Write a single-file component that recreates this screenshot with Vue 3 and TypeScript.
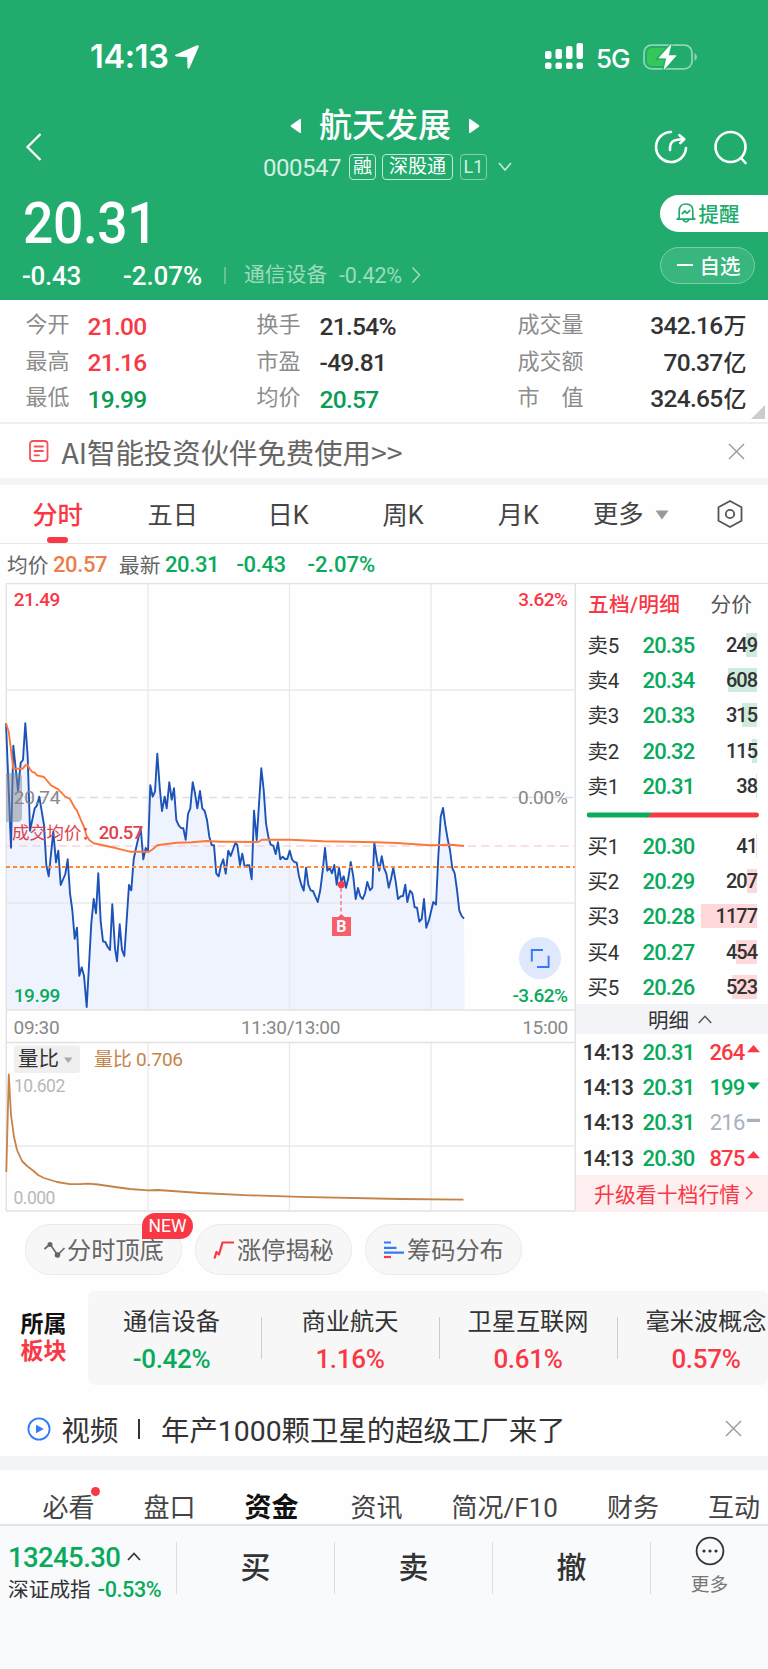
<script setup lang="ts">
interface Level { name: string; price: string; qty: string; bar: number }
interface Trade { price: string; qty: string; dir: 'up' | 'down' | 'flat' }
interface Sector { name: string; change: string; down?: boolean }

const stats = [
  ['今开', '21.00', 'red', '换手', '21.54%', '', '成交量', '342.16', '万'],
  ['最高', '21.16', 'red', '市盈', '-49.81', '', '成交额', '70.37', '亿'],
  ['最低', '19.99', 'dgreen', '均价', '20.57', 'dgreen', '市　值', '324.65', '亿'],
]

const periods = ['分时', '五日', '日K', '周K', '月K']

const sells: Level[] = [
  { name: '卖5', price: '20.35', qty: '249', bar: 11 },
  { name: '卖4', price: '20.34', qty: '608', bar: 29 },
  { name: '卖3', price: '20.33', qty: '315', bar: 15 },
  { name: '卖2', price: '20.32', qty: '115', bar: 5 },
  { name: '卖1', price: '20.31', qty: '38', bar: 1 },
]
const buys: Level[] = [
  { name: '买1', price: '20.30', qty: '41', bar: 1 },
  { name: '买2', price: '20.29', qty: '207', bar: 10 },
  { name: '买3', price: '20.28', qty: '1177', bar: 56 },
  { name: '买4', price: '20.27', qty: '454', bar: 21 },
  { name: '买5', price: '20.26', qty: '523', bar: 25 },
]
const trades: Trade[] = [
  { price: '20.31', qty: '264', dir: 'up' },
  { price: '20.31', qty: '199', dir: 'down' },
  { price: '20.31', qty: '216', dir: 'flat' },
  { price: '20.30', qty: '875', dir: 'up' },
]
const sectors: Sector[] = [
  { name: '通信设备', change: '-0.42%', down: true },
  { name: '商业航天', change: '1.16%' },
  { name: '卫星互联网', change: '0.61%' },
  { name: '毫米波概念', change: '0.57%' },
]
const infoTabs = ['必看', '盘口', '资金', '资讯', '简况/F10', '财务', '互动']

/* Series are stored at a third of a pixel; y counts from 117px below the chart top. */
type Pt = [number, number]
const parse = (s: string, dx = 0, dy = 0): Pt[] =>
  s.trim().split(/\s+/).map((p) => {
    const [x, y] = p.split(',').map(Number)
    return [(x + dx) / 3, (y + dy) / 3 + 117]
  })
const toPath = (pts: Pt[]): string => pts.map(([x, y]) => `${x.toFixed(1)},${y.toFixed(1)}`).join(' ')

const price: Pt[] = [
  ...parse(`18,70 33,443 40,137 54,272 62,188 69,180 76,70 83,170 90,392 104,325 111,316 118,290 132,375 139,495
    146,529 160,395 168,487 175,452 182,555 196,522 203,478 210,580 217,630 224,716 231,683 238,827 245,802 252,827
    260,921 274,670 281,597 288,640 295,520 302,665 309,724 316,726 323,741 330,750 337,613 345,745 351,784 359,673
    366,750 373,768 387,555 394,571 401,478 408,445 422,384 430,478 437,444 444,455 451,256 458,290 465,275 472,161
    479,262 486,333 494,290 500,325 508,247 515,299 522,265 529,360 536,376 543,384 550,385 557,419 564,342 571,325
    578,247 585,280 592,325 600,273 607,325 614,333 621,360 628,410 635,435 642,436 649,521 656,529 663,495 670,478
    677,521 685,452 692,468 706,429 712,435 720,495 727,461 734,501 741,496`),
  ...parse(`58,376 65,418 72,212 80,300 94,85 101,150 108,250 115,290 122,314 130,317 137,342 144,307 151,358 158,350
    165,357 172,357 179,332 186,358 193,366 200,368 207,409 214,434 221,452 228,383 235,434 242,451 249,453 256,469
    263,486 271,450 278,392 285,324 292,392 299,384 306,400 313,375 320,434 327,383 334,425 341,409 348,443 355,415
    362,366 370,410 377,477 384,444 391,469 398,477 405,460 412,426 420,451 427,443 433,308 441,360 448,392 455,349
    462,384 469,400 476,443 483,417 490,383 497,425 504,477 512,469 519,468 526,434 532,486 540,452 547,460 554,502
    561,503 568,545 575,537 582,477 589,563 597,540 610,486 618,494 625,350 632,230 639,204 646,255 653,298 660,330
    667,384 674,400 681,450 688,512 695,528 702,536`, 690, 120),
]
const average: Pt[] = [
  ...parse(`18,70 26,95 33,150 40,206 68,206 76,196 83,195 90,208 97,216 104,218 111,226 132,231 153,256 175,268
    196,290 210,297 224,323 231,332 245,366 252,380 260,408 268,420 281,430 309,436 350,445 390,455 447,455 458,448
    472,436 500,432 530,428 575,427 620,423 660,425`),
  ...parse('0,305 85,306 95,299 180,299 280,304 440,307 500,309 600,316 665,314 702,318', 690, 120),
]
const pricePath = toPath(price)
const areaPath = `6,426.5 ${pricePath} 464.6,426.5`
const averagePath = toPath(average)
</script>

<template>
  <div class="page">
    <header class="head">
      <div class="status">
        <span class="clock">14:13</span>
        <svg class="loc" width="26" height="26" viewBox="0 0 26 26"><path d="M22.5 1.6 Q25.2 .6 24.6 3.2 L15.7 23.6 Q14.3 26 13.5 23.5 L13.2 13.3 L2.5 12.6 Q-.3 11.8 2 10.4 Z" fill="#fff" /></svg>
        <svg class="signal" width="40" height="28" viewBox="0 0 40 28" fill="#fff">
          <rect x="0" y="9" width="6.5" height="8" rx="2" /><rect x="10.5" y="7" width="6.5" height="10" rx="2" />
          <rect x="21" y="4" width="6.5" height="13" rx="2" /><rect x="31.5" y="1" width="6.5" height="16" rx="2" />
          <rect x="0" y="20.5" width="6.5" height="6.5" rx="2" /><rect x="10.5" y="20.5" width="6.5" height="6.5" rx="2" />
          <rect x="21" y="20.5" width="6.5" height="6.5" rx="2" /><rect x="31.5" y="20.5" width="6.5" height="6.5" rx="2" />
        </svg>
        <span class="net">5G</span>
        <svg class="battery" width="56" height="28" viewBox="0 0 56 28">
          <rect x="1" y="2.2" width="48" height="23.6" rx="7.5" fill="none" stroke="#8ed5b3" stroke-width="1.8" />
          <path d="M9 5 H23 V23 H9 Q4 23 4 18 V10 Q4 5 9 5Z" fill="#34c759" />
          <path d="M51.5 10 Q54 11.5 54 14 Q54 16.5 51.5 18Z" fill="#8ed5b3" />
          <path d="M28.6 .5 L14 15.8 H22.6 L20 28 L34.6 12 H26.2Z" fill="#fff" stroke="#21ac6e" stroke-width="2" />
          <path d="M28 1.5 L16 15 H23.7 L21 26.5 L33 12.7 H25.3Z" fill="#fff" stroke="#fff" stroke-width=".8" stroke-linejoin="round" />
        </svg>
      </div>

      <div class="titlebar">
        <svg class="back" width="18" height="30" viewBox="0 0 18 30"><path d="M15.5 2 L2.5 15 L15.5 28" fill="none" stroke="#fff" stroke-width="2.3" /></svg>
        <div class="title">
          <div class="name">
            <svg width="12" height="16" viewBox="0 0 12 16"><path d="M11 1.5 V14.5 Q10.5 15.5 9.5 14.7 L1 8.7 Q.3 8 1 7.3 L9.5 1.3 Q10.5 .6 11 1.5Z" fill="#fff" /></svg>
            <h1>航天发展</h1>
            <svg width="12" height="16" viewBox="0 0 12 16"><path d="M1 1.5 V14.5 Q1.5 15.5 2.5 14.7 L11 8.7 Q11.7 8 11 7.3 L2.5 1.3 Q1.5 .6 1 1.5Z" fill="#fff" /></svg>
          </div>
          <div class="code">
            <span class="num">000547</span>
            <span class="tag t1">融</span><span class="tag t3">深股通</span><span class="tag dim">L1</span>
            <svg width="14" height="10" viewBox="0 0 14 10"><path d="M1 1 L7 8 L13 1" fill="none" stroke="#c8ead9" stroke-width="1.6" /></svg>
          </div>
        </div>
        <svg class="share" width="36" height="36" viewBox="0 0 36 36" fill="none" stroke="#fff" stroke-width="2.6" stroke-linecap="round" stroke-linejoin="round">
          <path d="M18 3 A15 15 0 1 0 33 19" /><path d="M17 21 C16.5 13 20 10 30.5 10.2" /><path d="M26.5 6.2 L31.3 10.2 L27.3 14.2" />
        </svg>
        <svg class="search" width="36" height="36" viewBox="0 0 36 36" fill="none" stroke="#fff" stroke-width="2.6" stroke-linecap="round">
          <circle cx="17.5" cy="18" r="15" /><path d="M28 29 L32.5 34" />
        </svg>
      </div>

      <div class="quote">
        <div class="qleft">
          <div class="big">20.31</div>
          <div class="sub">
            <span class="c1">-0.43</span><span class="c2">-2.07%</span><i></i>
            <span class="ind">通信设备</span><span class="indv">-0.42%</span>
            <svg width="10" height="18" viewBox="0 0 10 18"><path d="M1.5 1.5 L8.5 9 L1.5 16.5" fill="none" stroke="#a0d9bf" stroke-width="1.6" /></svg>
          </div>
        </div>
        <div class="actions">
          <div class="pill solid">
            <svg width="20" height="22" viewBox="0 0 20 22" fill="none" stroke="#21ac6e" stroke-width="1.7" stroke-linejoin="round" stroke-linecap="round">
              <path d="M3.2 15.5 V9 Q3.2 2 10 2 Q16.8 2 16.8 9 V15.5 L18.8 17.2 H1.2Z" /><path d="M7 17.5 Q10 22.5 13 17.5" /><path d="M6.2 11.5 L9 9 L10.8 11.3 L13.8 8.6" />
            </svg>提醒
          </div>
          <div class="pill ghost"><i></i>自选</div>
        </div>
      </div>
    </header>

    <section class="stats">
      <div v-for="r in stats" :key="r[0]" class="srow">
        <span class="lab">{{ r[0] }}</span><span class="val" :class="r[2]">{{ r[1] }}</span>
        <span class="lab">{{ r[3] }}</span><span class="val" :class="r[5]">{{ r[4] }}</span>
        <span class="lab">{{ r[6] }}</span><span class="val right">{{ r[7] }}<small>{{ r[8] }}</small></span>
      </div>
      <svg class="corner" width="14" height="14" viewBox="0 0 14 14"><path d="M14 0 V14 H0Z" fill="#ccc" /></svg>
    </section>

    <section class="notice">
      <svg class="ic" width="20" height="22" viewBox="0 0 20 22" fill="none" stroke="#f5505c" stroke-width="1.8" stroke-linecap="round"><rect x="1" y="1" width="17.5" height="20" rx="3" /><path d="M5.5 6.5 H14 M5.5 11 H14 M5.5 15.3 H10" /></svg>
      <span>AI智能投资伙伴免费使用&gt;&gt;</span>
      <svg class="x" width="17" height="17" viewBox="0 0 17 17"><path d="M1 1 L16 16 M16 1 L1 16" stroke="#999" stroke-width="1.4" /></svg>
    </section>
    <div class="band b1"></div>

    <nav class="periods">
      <div v-for="(p, i) in periods" :key="p" class="ptab" :class="{ on: i === 0 }">{{ p }}</div>
      <div class="ptab more">更多<svg width="14" height="10" viewBox="0 0 14 10"><path d="M.5 .5 H13.5 L7 9.5Z" fill="#999" /></svg></div>
      <svg class="hex" width="28" height="30" viewBox="0 0 28 30" fill="none" stroke="#555" stroke-width="1.8" stroke-linejoin="round"><path d="M14 2 L25.5 8.3 V21.7 L14 28 L2.5 21.7 V8.3Z" /><circle cx="14" cy="15" r="4.2" /></svg>
    </nav>

    <div class="legend">
      <span>均价</span><b class="orange v1">20.57</b><span>最新</span><b class="v2">20.31</b><b class="v3">-0.43</b><b class="v4">-2.07%</b>
    </div>

    <main class="market">
      <div class="charts">
        <svg class="chart" width="576" height="629" viewBox="0 0 576 629">
          <polygon :points="areaPath" fill="#eff3fe" />
          <g stroke="#e9e9ea" stroke-width="1.3" fill="none">
            <path d="M148 0 V426 M289.5 0 V426 M431 0 V426 M6 107 H575 M6 320 H575" />
            <path d="M148 459 V628 M289.5 459 V628 M431 459 V628 M6 563 H575" />
          </g>
          <path d="M6.3 0 V628 M6 .6 H576 M575.3 0 V628 M6 427 H575 M6 459.5 H575 M6 628 H575" stroke="#e2e2e4" stroke-width="1.4" fill="none" />
          <path d="M24 214.5 H575" stroke="#d5dfe9" stroke-width="1.4" stroke-dasharray="8 5.2" />
          <path d="M6 263 H575" stroke="#f8d5d9" stroke-width="1.4" stroke-dasharray="8 5.2" />
          <polyline :points="pricePath" fill="none" stroke="#1b53b8" stroke-width="1.9" stroke-linejoin="round" />
          <polyline :points="averagePath" fill="none" stroke="#fc783a" stroke-width="1.9" stroke-linejoin="round" />
          <path d="M6 284 H575" stroke="#fc8a38" stroke-width="2" stroke-dasharray="4 3" />
          <path d="M6 190 H17 Q22 190 22 195 V234 Q22 239 17 239 H6Z" fill="#7d8694" fill-opacity=".5" />
          <path d="M341 305 V330" stroke="#f0606c" stroke-width="1.2" stroke-dasharray="4 2.5" />
          <circle cx="341.3" cy="301.6" r="3.6" fill="#f93a48" />
          <path d="M332 334 H338 L341.3 331 L344.5 334 H351 V353 H332Z" fill="#f85d6c" />
          <text x="341.4" y="349.3" class="bm" text-anchor="middle">B</text>
          <circle cx="540" cy="375" r="21" fill="#dfe8fd" />
          <path d="M531.8 378.5 V367 H543 M537 384 H548.6 V372.8" fill="none" stroke="#2f7bf8" stroke-width="1.9" />
          <g class="ax">
            <text x="13.8" y="22.8" fill="#f93845">21.49</text>
            <text x="567.5" y="22.8" fill="#f93845" text-anchor="end">3.62%</text>
            <text x="13.8" y="220.8" class="mid">20.74</text>
            <text x="567.5" y="220.8" class="mid" text-anchor="end">0.00%</text>
            <text x="13.8" y="419" fill="#08aa5b">19.99</text>
            <text x="567.5" y="419" fill="#08aa5b" text-anchor="end">-3.62%</text>
            <text x="12" y="256" fill="#df424d" class="avg">成交均价：</text>
            <text x="98.8" y="255.8" fill="#df424d" class="avgv">20.57</text>
          </g>
          <g class="ax mid">
            <text x="13.5" y="450.8">09:30</text><text x="290.5" y="450.8" text-anchor="middle">11:30/13:00</text><text x="568" y="450.8" text-anchor="end">15:00</text>
          </g>
          <rect x="14" y="462.5" width="66" height="27.5" rx="3" fill="#efefef" />
          <text x="18" y="482.5" class="sel">量比</text>
          <path d="M64 474.5 H72.5 L68.2 480Z" fill="#aaa" />
          <text x="94" y="482.5" class="lb">量比 0.706</text>
          <g class="ax small"><text x="14" y="509">10.602</text><text x="13.5" y="620.5">0.000</text></g>
          <polyline points="6.3,589 8.8,491.5 11,532 14,554 17,567 22,578 27,583 33,587.5 38,592 44,595 57,599 70,601.2 80,601.2 88,600.6 98,601.5 115,604 130,606 148,607.3 158,607 200,610 250,612.3 300,613.8 400,616 463.5,616.7" fill="none" stroke="#c5834a" stroke-width="1.8" stroke-linejoin="round" />
        </svg>
      </div>

      <aside class="book">
        <div class="bhead"><b>五档/明细</b><span>分价</span></div>
        <div v-for="l in sells" :key="l.name" class="lv">
          <span>{{ l.name }}</span><em>{{ l.price }}</em><strong>{{ l.qty }}<i class="g" :style="{ width: l.bar + 'px' }"></i></strong>
        </div>
        <svg class="ratio" width="174" height="6" viewBox="0 0 174 6"><path d="M3 .6 H67 L62 5.4 H3 Q.7 5.4 .7 3 Q.7 .6 3 .6Z" fill="#0cab5d" /><path d="M67 .6 H170.5 Q173 .6 173 3 Q173 5.4 170.5 5.4 H61Z" fill="#f93845" /></svg>
        <div v-for="l in buys" :key="l.name" class="lv">
          <span>{{ l.name }}</span><em>{{ l.price }}</em><strong>{{ l.qty }}<i class="r" :style="{ width: l.bar + 'px' }"></i></strong>
        </div>
        <div class="detail">明细<svg width="14" height="9" viewBox="0 0 14 9"><path d="M.8 8 L7 1.2 L13.2 8" fill="none" stroke="#555" stroke-width="1.4" /></svg></div>
        <div v-for="(t, i) in trades" :key="i" class="tr">
          <span>14:13</span><em>{{ t.price }}</em><strong :class="t.dir">{{ t.qty }}</strong>
          <svg width="13" height="9" viewBox="0 0 13 9">
            <path v-if="t.dir === 'up'" d="M6.5 0 L13 7.3 H0Z" fill="#f93845" />
            <path v-else-if="t.dir === 'down'" d="M0 1.5 H13 L6.5 8.8Z" fill="#08aa5b" />
            <rect v-else x="0" y="2.8" width="13" height="3.2" fill="#a9b2c0" />
          </svg>
        </div>
        <div class="upgrade">升级看十档行情<svg width="8" height="14" viewBox="0 0 8 14"><path d="M1 1 L7 7 L1 13" fill="none" stroke="#f93845" stroke-width="1.4" /></svg></div>
      </aside>
    </main>

    <section class="chips">
      <div class="chip">
        <svg width="23" height="22" viewBox="0 0 23 22"><path d="M1.5 10 L7 5 L14.5 16 L21.5 9" fill="none" stroke="#666" stroke-width="1.7" /><circle cx="7" cy="5.5" r="2.5" fill="#666" /><circle cx="14.5" cy="16" r="2.8" fill="#666" /></svg><span>分时顶底</span>
        <span class="new">NEW</span>
      </div>
      <div class="chip">
        <svg width="23" height="22" viewBox="0 0 23 22"><path d="M1.5 19.5 L3.5 13 L6 15.5 L9.5 3.5 H21" fill="none" stroke="#f93845" stroke-width="2.2" stroke-linejoin="round" /></svg><span>涨停揭秘</span>
      </div>
      <div class="chip">
        <svg width="23" height="22" viewBox="0 0 23 22" stroke-width="2.2"><path d="M1 3.5 H8 M1 8.8 H13.5 M1 13.6 H21" stroke="#2f7bf8" /><path d="M1 18 H8" stroke="#f93845" /></svg><span>筹码分布</span>
      </div>
    </section>

    <section class="sectors">
      <div class="slabel"><b>所属</b><b class="red">板块</b></div>
      <div class="sbox">
        <div v-for="s in sectors" :key="s.name" class="sitem">
          <span>{{ s.name }}</span><em :class="{ down: s.down }">{{ s.change }}</em>
        </div>
      </div>
    </section>

    <section class="video">
      <svg width="24" height="24" viewBox="0 0 24 24"><circle cx="12" cy="12" r="10.6" fill="none" stroke="#2f7bf8" stroke-width="1.8" /><path d="M9 7.8 L16.8 12 L9 16.2Z" fill="#2f7bf8" /></svg>
      <span class="vt">视频</span><i></i><span>年产1000颗卫星的超级工厂来了</span>
      <svg class="x" width="17" height="17" viewBox="0 0 17 17"><path d="M1 1 L16 16 M16 1 L1 16" stroke="#999" stroke-width="1.4" /></svg>
    </section>
    <div class="band b2"></div>

    <nav class="info">
      <span v-for="t in infoTabs" :key="t" :class="{ on: t === '资金', dot: t === '必看' }">{{ t }}</span>
    </nav>

    <footer class="foot">
      <div class="index">
        <div class="iv">13245.30<svg width="14" height="9" viewBox="0 0 14 9"><path d="M1 8 L7 1.5 L13 8" fill="none" stroke="#333" stroke-width="1.7" /></svg></div>
        <div class="in">深证成指<b>-0.53%</b></div>
      </div>
      <div class="btn">买</div><div class="btn">卖</div><div class="btn">撤</div>
      <div class="more2">
        <svg width="30" height="30" viewBox="0 0 30 30"><circle cx="15" cy="15" r="13.4" fill="none" stroke="#333" stroke-width="1.8" /><g fill="#333"><circle cx="9" cy="15" r="1.6" /><circle cx="15" cy="15" r="1.6" /><circle cx="21" cy="15" r="1.6" /></g></svg>
        <span>更多</span>
      </div>
    </footer>
  </div>
</template>

<style>
body { margin: 0; background: #fff; }
</style>

<style scoped>
* { box-sizing: border-box; }
.page { width: 768px; height: 1669px; overflow: hidden; background: #fefefe; color: #333; font-family: Roboto, "Noto Sans CJK SC", sans-serif; white-space: nowrap; }
svg { display: block; flex: none; }
em, i { font-style: normal; }
.red { color: #f93845; }
.dgreen { color: #0a9c55; }
.orange { color: #e97f4b; }

.head { height: 300px; background: #21ac6e; color: #fff; }
.status { height: 100px; display: flex; padding: 0 0 0 90px; }
.clock { font: 600 32.5px/36px Inter, sans-serif; margin-top: 39px; width: 84px; letter-spacing: -.3px; }
.loc { margin-top: 44px; }
.signal { margin: 42px 0 0 345px; }
.net { font: 500 26px/30px Inter, sans-serif; margin: 44px 0 0 11px; width: 35px; letter-spacing: -1px; }
.battery { margin: 43px 0 0 12px; }

.titlebar { height: 88px; display: flex; }
.back { margin: 32px 0 0 25px; }
.title { width: 250px; margin-left: 219px; }
.name { display: flex; align-items: center; height: 50px; padding: 2px 0 0 28px; gap: 17px; }
.name h1 { margin: 0; font-size: 33px; font-weight: 500; line-height: 50px; width: 132px; }
.code { display: flex; height: 33px; align-items: center; padding-left: 1px; }
.num { font-size: 24px; width: 86px; letter-spacing: -.5px; color: #d5efe2; padding-top: 2px; }
.code .tag { height: 26px; width: 27px; border: 1.5px solid #c0e7d4; border-radius: 4px; font-size: 19px; line-height: 23px; text-align: center; margin-right: 6px; }
.code .t1 { width: 27px; }
.code .t3 { width: 71px; margin-right: 7px; }
.code .dim { border-color: #85cfae; color: #d5efe2; font-size: 18px; margin-right: 11px; }
.share { margin: 29px 0 0 141px; }
.search { margin: 29px 0 0 23.5px; }

.quote { height: 112px; display: flex; justify-content: space-between; }
.qleft { padding-left: 22px; }
.big { font-size: 56.5px; font-weight: 500; line-height: 60px; height: 70px; padding: 6px 0 0 1px; width: 150px; transform: scaleX(.945); transform-origin: left; letter-spacing: -.4px; }
.sub { display: flex; align-items: center; height: 34px; font-size: 26px; font-weight: 500; }
.c1 { width: 101px; letter-spacing: -.3px; padding-top: 1px; }
.c2 { width: 101px; letter-spacing: -.1px; padding-top: 1px; }
.sub i { width: 1.5px; height: 17px; background: #64c499; margin-right: 18.5px; }
.ind { font-size: 20.8px; line-height: 30px; font-weight: 400; width: 95px; color: #9fdabf; margin-top: -1px; }
.indv { font-size: 21.5px; font-weight: 400; width: 72px; color: #9fdabf; letter-spacing: -.1px; }
.actions { padding-top: 7px; width: 108.5px; }
.pill { height: 37px; border-radius: 19px; display: flex; align-items: center; font-size: 20.5px; font-weight: 500; }
.solid { border-radius: 19px 0 0 19px; background: #fff; color: #21ac6e; padding: 0 0 1px 16px; gap: 3px; margin-bottom: 15px; }
.ghost { width: 95px; background: #39b57e; border: 1.5px solid #7accaa; padding: 0 0 2px 16px; }
.ghost i { width: 16px; height: 2px; background: #fff; margin-right: 7px; }

.stats { height: 124px; padding-top: 6px; border-bottom: 2px solid #efefef; position: relative; background: #fff; }
.srow { display: grid; grid-template-columns: 62px 169px 63px 198px 90px 139px; padding-left: 25.5px; height: 36.7px; align-items: center; }
.lab { font-size: 22px; color: #8c8c8c; line-height: 36px; margin-top: -1px; }
.val { font-size: 24.5px; font-weight: 500; line-height: 36px; padding-top: 2px; letter-spacing: -.7px; }
.right { text-align: right; }
.right small { font-size: 23px; font-weight: 500; letter-spacing: 0; margin-left: 1px; }
.corner { position: absolute; right: 3px; bottom: 3px; }

.notice { height: 54px; display: flex; align-items: center; padding: 0 23px 0 28.5px; font-size: 28.4px; font-family: "Noto Sans CJK SC", sans-serif; color: #666; }
.notice span { margin-left: 13px; line-height: 54px; padding-top: 1px; }
.x { margin-left: auto; }
.band { background: #f2f4f8; }
.b1 { height: 7px; }

.periods { height: 59px; border-bottom: 1.5px solid #e6e6e6; display: flex; align-items: center; padding-left: 0; }
.ptab { width: 115.2px; text-align: center; font-size: 25.3px; line-height: 58px; padding-top: 2px; height: 58px; color: #444; position: relative; }
.ptab.on { color: #f93845; font-weight: 500; }
.ptab.on::after { content: ""; position: absolute; left: 47px; bottom: 0; width: 21px; height: 6px; border-radius: 3px; background: #f93845; }
.more { display: flex; align-items: center; gap: 11px; width: 123px; padding-left: 17px; }
.hex { margin-left: 17px; }

.legend { height: 39px; display: flex; align-items: center; padding-left: 7px; font-size: 20.7px; color: #666; }
.legend b { font-weight: 500; font-size: 22px; color: #08aa5b; letter-spacing: -.4px; padding-top: 2px; }
.legend span { width: 46px; }
.legend .v1 { color: #e97f4b; width: 66px; }
.legend .v2 { width: 71.5px; }
.legend .v3 { width: 71px; }
.legend .v4 { letter-spacing: .1px; }

.market { display: flex; height: 629px; }
.charts { width: 576px; }
.ax { font: 500 19px Roboto, sans-serif; letter-spacing: -.5px; }
.mid { fill: #888; font-weight: 400; letter-spacing: -.3px; }
.avg { font: 400 17.5px "Noto Sans CJK SC", sans-serif; letter-spacing: -.2px; }
.avgv { font-size: 18.5px; letter-spacing: -.7px; }
.small { fill: #b8b8b8; font-weight: 400; font-size: 17.5px; }
.sel { font: 400 20.5px "Noto Sans CJK SC", sans-serif; fill: #333; }
.lb { font: 400 19px Roboto, "Noto Sans CJK SC", sans-serif; fill: #c5834a; letter-spacing: -.2px; }
.bm { font: 700 16px Roboto, sans-serif; fill: #fff; }

.book { width: 192px; border-top: 1.4px solid #e2e2e4; }
.bhead { height: 43.5px; display: flex; justify-content: space-between; padding: 0 16px 0 12px; font-size: 20.7px; line-height: 43px; }
.bhead b { color: #f93845; font-weight: 500; letter-spacing: .3px; }
.bhead span { color: #555; }
.lv { height: 35.2px; display: grid; grid-template-columns: 55px 52px 62.5px; padding-left: 11.5px; align-items: center; font-size: 20.5px; }
.lv > span { margin-top: -2px; letter-spacing: -.2px; }
.lv em, .tr em { font-size: 22px; font-weight: 500; color: #08aa5b; letter-spacing: -.85px; }
.lv em { padding-top: 1px; }
.lv strong { font-size: 20px; font-weight: 500; text-align: right; position: relative; line-height: 25px; height: 24px; letter-spacing: -1px; z-index: 0; }
.lv strong i { position: absolute; right: 0; top: 0; height: 24px; z-index: -1; }
.g { background: #cfebde; }
.r { background: #fed8da; }
.ratio { margin: 9px 0 10px 9.5px; }
.detail { height: 30px; background: #f3f4f8; margin-top: 0; display: flex; align-items: center; justify-content: center; gap: 9px; font-size: 20.5px; padding-left: 16px; padding-right: 0; }
.tr { height: 35.2px; display: grid; grid-template-columns: 60px 50px 52px 15px; padding: 1px 0 0 6.5px; align-items: center; font-size: 22px; font-weight: 500; }
.tr span { letter-spacing: -1.1px; }
.tr strong { font-weight: 500; text-align: right; padding-right: 0; letter-spacing: -.8px; }
.tr svg { margin: -5px 0 0 2px; }
.tr .up { color: #f93845; }
.tr .down { color: #08aa5b; }
.tr .flat { color: #a9b2c0; font-weight: 400; }
.upgrade { height: 37px; background: #ffeef0; color: #f93845; display: flex; align-items: center; font-size: 20.9px; padding: 0 0 2px 18px; gap: 5px; }

.chips { height: 79px; display: flex; gap: 13px; padding: 12px 0 0 25px; }
.chip { width: 157px; height: 51px; border: 1.3px solid #eaeaea; border-radius: 26px; background: #f7f7f7; color: #666; display: flex; align-items: center; font-size: 24.2px; padding-left: 17px; gap: 1px; position: relative; }
.chip > span { margin-top: -2px; }
.chip .new { position: absolute; left: 116px; top: -12px; margin: 0; width: 51px; height: 26px; border-radius: 13px 13px 13px 0; background: #f93845; color: #fff; font-size: 17.5px; line-height: 27px; text-align: center; }

.sectors { height: 94px; display: flex; }
.slabel { width: 88px; padding: 19.5px 0 0 20.5px; font-size: 23px; line-height: 27.5px; color: #111; }
.slabel b { display: block; font-weight: 700; }
.slabel .red { color: #f93845; }
.sbox { width: 680px; height: 94px; background: #f7f7f7; border-radius: 7px; display: flex; overflow: hidden; }
.sitem { width: 178px; flex: none; display: flex; flex-direction: column; align-items: center; padding-top: 15px; position: relative; font-size: 24.2px; line-height: 32px; }
.sitem:first-child { width: 173px; padding-right: 6px; }
.sitem + .sitem::before { content: ""; position: absolute; left: 0; top: 26px; height: 42px; width: 1.3px; background: #ccc; }
.sitem em { font-size: 26px; font-weight: 500; color: #f93845; line-height: 42px; letter-spacing: -.3px; }
.sitem .down { color: #08aa5b; }

.video { height: 71px; display: flex; align-items: center; padding: 16px 26.5px 0 26.5px; font-size: 28.4px; color: #333; }
.vt { margin-left: 11px; width: 76px; }
.video > span { margin-top: -1px; }
.video i { width: 2.5px; height: 20px; background: #333; margin-right: 21px; }
.b2 { height: 14px; }

.info { height: 54px; display: flex; padding: 18.5px 0 0 42.5px; gap: 49px; font-size: 26px; line-height: 38px; color: #444; }
.info span { position: relative; flex: none; }
.info .on { font-weight: 700; color: #111; font-size: 27px; margin-right: 3px; }
.dot::after { content: ""; position: absolute; right: -5px; top: -2px; width: 9px; height: 9px; border-radius: 50%; background: #f93845; }

.foot { height: 145px; background: #f9fafc; border-top: 2px solid #e3e4e6; display: flex; padding-top: 16px; }
.index { width: 176px; padding-left: 8px; }
.iv { font-size: 27.5px; font-weight: 500; line-height: 32px; color: #08aa5b; display: flex; align-items: center; gap: 7px; letter-spacing: -.6px; }
.iv svg { margin-top: -3px; }
.in { font-size: 20.7px; line-height: 31px; }
.in b { font-size: 21.5px; font-weight: 500; color: #08aa5b; margin-left: 7px; letter-spacing: -.4px; }
.btn { width: 158px; height: 52px; border-left: 1.3px solid #dcdde0; text-align: center; font-size: 30px; font-weight: 500; line-height: 52px; }
.more2 { width: 118px; height: 52px; border-left: 1.3px solid #dcdde0; display: flex; flex-direction: column; align-items: center; font-size: 18.7px; color: #777; }
.more2 svg { margin-top: -6.5px; }
.more2 span { line-height: 38px; }
</style>
